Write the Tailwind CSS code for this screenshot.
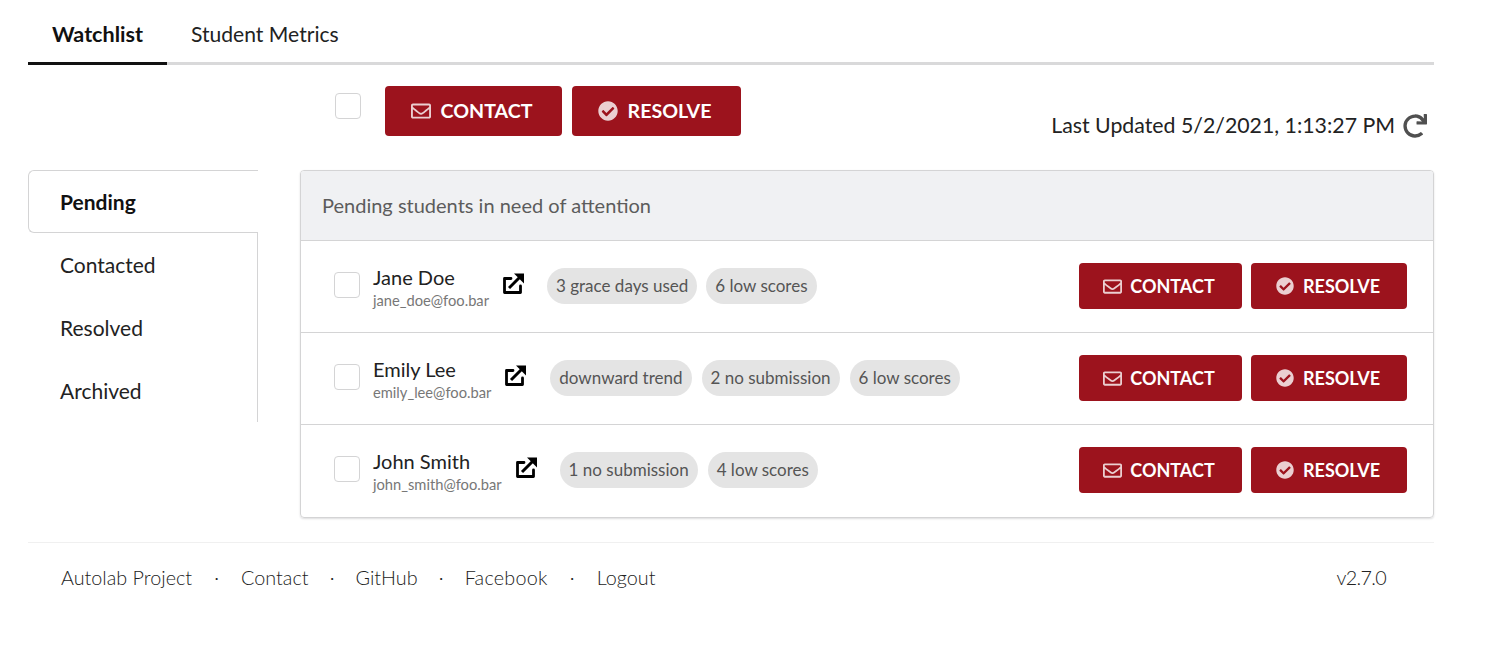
<!DOCTYPE html>
<html>
<head>
<meta charset="utf-8">
<script src="https://cdn.jsdelivr.net/npm/@tailwindcss/browser@4"></script>
</head>
<body class="bg-white font-['Lato',sans-serif] text-[#1b1c1d] w-[1494px] h-[647px] overflow-hidden">
<div class="w-[1406px] ml-[28px] pt-[10px]">
  <div class="flex h-[55px] border-b-[3px] border-[#d9d9da]">
    <div class="w-[139px] h-[55px] border-b-[3px] border-[#111] pl-[24px] pt-[10px] text-[21.6px] leading-[28px] font-bold text-[#111]">Watchlist</div>
    <div class="pl-[24px] pt-[10px] text-[21.1px] leading-[28px] text-[#222]">Student Metrics</div>
  </div>

  <div class="flex h-[105px] pl-[307px]">
    <div class="mt-[28px] w-[26px] h-[26px] rounded-[4px] border border-[#d4d4d5]"></div>
    <div class="ml-[24px] mt-[21px] flex gap-[10px]">
      <div class="w-[177px] h-[50px] pr-[4px] rounded-[4px] bg-[#9c131d] flex items-center justify-center gap-[10px] text-white font-bold text-[19.6px]">
        <svg class="w-[20px] h-[20px] opacity-80" viewBox="0 0 512 512" fill="currentColor"><path d="M464 64H48C21.49 64 0 85.49 0 112v288c0 26.51 21.49 48 48 48h416c26.51 0 48-21.49 48-48V112c0-26.51-21.49-48-48-48zm0 48v40.805c-22.422 18.259-58.168 46.651-134.587 106.49-16.841 13.247-50.201 45.072-73.413 44.701-23.208.375-56.579-31.459-73.413-44.701C106.18 199.465 70.425 171.067 48 152.805V112h416zM48 400V214.398c22.914 18.251 55.409 43.862 104.938 82.646 21.857 17.205 60.134 55.186 103.062 54.955 42.717.231 80.509-37.199 103.053-54.947 49.528-38.783 82.032-64.401 104.947-82.653V400H48z"/></svg>
        <span>CONTACT</span>
      </div>
      <div class="w-[169px] h-[50px] pr-[4px] rounded-[4px] bg-[#9c131d] flex items-center justify-center gap-[10px] text-white font-bold text-[19.6px]">
        <svg class="w-[20px] h-[20px] opacity-80" viewBox="0 0 512 512" fill="currentColor"><path d="M504 256c0 136.967-111.033 248-248 248S8 392.967 8 256 119.033 8 256 8s248 111.033 248 248zM227.314 387.314l184-184c6.248-6.248 6.248-16.379 0-22.627l-22.627-22.627c-6.248-6.249-16.379-6.249-22.628 0L216 308.118l-70.059-70.059c-6.248-6.248-16.379-6.248-22.628 0l-22.627 22.627c-6.248 6.248-6.248 16.379 0 22.627l104 104c6.249 6.249 16.379 6.249 22.628.001z"/></svg>
        <span>RESOLVE</span>
      </div>
    </div>
    <div class="ml-auto mr-[7px] mt-[46px] h-[30px] flex items-center gap-[8px]">
      <span class="text-[21.3px] text-[#222]">Last Updated 5/2/2021, 1:13:27 PM</span>
      <svg class="w-[24px] h-[24px] text-[#505050]" viewBox="0 0 512 512" fill="currentColor"><path d="M500.33 0h-47.41a12 12 0 0 0-12 12.57l4 82.76A247.42 247.42 0 0 0 256 8C119.34 8 7.9 119.53 8 256.19 8.1 393.07 119.1 504 256 504a247.1 247.1 0 0 0 166.18-63.91 12 12 0 0 0 .48-17.43l-34-34a12 12 0 0 0-16.38-.55A176 176 0 1 1 402.1 157.8l-101.53-4.87a12 12 0 0 0-12.57 12v47.41a12 12 0 0 0 12 12h200.33a12 12 0 0 0 12-12V12a12 12 0 0 0-12-12z"/></svg>
    </div>
  </div>

  <div class="flex">
    <div class="w-[230px] h-[252px] flex flex-col text-[21px]">
      <div class="h-[63px] border border-r-0 border-[#d4d4d5] rounded-l-[6px] pl-[31px] flex items-center font-bold text-[#111]">Pending</div>
      <div class="flex-1 border-r border-[#d4d4d5] flex flex-col">
        <div class="h-[63px] pl-[32px] flex items-center text-[#222]">Contacted</div>
        <div class="h-[63px] pl-[32px] flex items-center text-[#222]">Resolved</div>
        <div class="h-[63px] pl-[32px] flex items-center text-[#222]">Archived</div>
      </div>
    </div>

    <div class="ml-[42px] w-[1134px] h-[348px] rounded-[4px] border border-[#d4d4d5] shadow-[0_1px_2px_rgba(34,36,38,0.15)] overflow-hidden">
      <div class="h-[70px] bg-[#f0f1f3] border-b border-[#d4d4d5] pl-[21px] pb-[2px] flex items-center text-[20px] text-[#5c5c5c]">Pending students in need of attention</div>

      <div class="h-[92px] border-b border-[#d4d4d5] flex items-center pl-[33px] pr-[26px] pb-[1px]">
        <div class="w-[26px] h-[26px] mb-[2px] rounded-[4px] border border-[#d4d4d5]"></div>
        <div class="ml-[13px] mt-[3px] flex flex-col">
          <span class="text-[20px] leading-[25px] text-[#222]">Jane Doe</span>
          <span class="text-[14.7px] leading-[21px] text-[#777]">jane_doe@foo.bar</span>
        </div>
        <svg class="ml-[14px] mb-[5px] w-[21px] h-[21px] text-black" viewBox="0 0 21 21"><path d="M8 5.500H1.500v14h16V13" fill="none" stroke="currentColor" stroke-width="2.800" stroke-linejoin="round" stroke-linecap="round"/><path d="M6 15 17 4" fill="none" stroke="currentColor" stroke-width="3"/><path d="M11 .500h10V10.500z" fill="currentColor"/></svg>
        <div class="ml-[23px] flex gap-[9px] text-[17px] text-[#555]">
          <span class="h-[36px] rounded-full bg-[#e4e4e4] px-[9px] flex items-center">3 grace days used</span>
          <span class="h-[36px] rounded-full bg-[#e4e4e4] px-[9px] flex items-center">6 low scores</span>
        </div>
        <div class="ml-auto flex gap-[9px] text-white font-bold text-[18px]">
          <div class="w-[163px] h-[46px] pr-[3px] rounded-[4px] bg-[#9c131d] flex items-center justify-center gap-[8px]">
            <svg class="w-[19px] h-[19px] opacity-80" viewBox="0 0 512 512" fill="currentColor"><path d="M464 64H48C21.49 64 0 85.49 0 112v288c0 26.51 21.49 48 48 48h416c26.51 0 48-21.49 48-48V112c0-26.51-21.49-48-48-48zm0 48v40.805c-22.422 18.259-58.168 46.651-134.587 106.49-16.841 13.247-50.201 45.072-73.413 44.701-23.208.375-56.579-31.459-73.413-44.701C106.18 199.465 70.425 171.067 48 152.805V112h416zM48 400V214.398c22.914 18.251 55.409 43.862 104.938 82.646 21.857 17.205 60.134 55.186 103.062 54.955 42.717.231 80.509-37.199 103.053-54.947 49.528-38.783 82.032-64.401 104.947-82.653V400H48z"/></svg>
            <span>CONTACT</span>
          </div>
          <div class="w-[156px] h-[46px] pr-[2px] rounded-[4px] bg-[#9c131d] flex items-center justify-center gap-[9px]">
            <svg class="w-[18px] h-[18px] opacity-80" viewBox="0 0 512 512" fill="currentColor"><path d="M504 256c0 136.967-111.033 248-248 248S8 392.967 8 256 119.033 8 256 8s248 111.033 248 248zM227.314 387.314l184-184c6.248-6.248 6.248-16.379 0-22.627l-22.627-22.627c-6.248-6.249-16.379-6.249-22.628 0L216 308.118l-70.059-70.059c-6.248-6.248-16.379-6.248-22.628 0l-22.627 22.627c-6.248 6.248-6.248 16.379 0 22.627l104 104c6.249 6.249 16.379 6.249 22.628.001z"/></svg>
            <span>RESOLVE</span>
          </div>
        </div>
      </div>

      <div class="h-[92px] border-b border-[#d4d4d5] flex items-center pl-[33px] pr-[26px] pb-[1px]">
        <div class="w-[26px] h-[26px] mb-[2px] rounded-[4px] border border-[#d4d4d5]"></div>
        <div class="ml-[13px] mt-[3px] flex flex-col">
          <span class="text-[20px] leading-[25px] text-[#222]">Emily Lee</span>
          <span class="text-[14.7px] leading-[21px] text-[#777]">emily_lee@foo.bar</span>
        </div>
        <svg class="ml-[14px] mb-[5px] w-[21px] h-[21px] text-black" viewBox="0 0 21 21"><path d="M8 5.500H1.500v14h16V13" fill="none" stroke="currentColor" stroke-width="2.800" stroke-linejoin="round" stroke-linecap="round"/><path d="M6 15 17 4" fill="none" stroke="currentColor" stroke-width="3"/><path d="M11 .500h10V10.500z" fill="currentColor"/></svg>
        <div class="ml-[24px] flex gap-[10px] text-[17px] text-[#555]">
          <span class="h-[36px] rounded-full bg-[#e4e4e4] px-[9px] flex items-center">downward trend</span>
          <span class="h-[36px] rounded-full bg-[#e4e4e4] px-[9px] flex items-center">2 no submission</span>
          <span class="h-[36px] rounded-full bg-[#e4e4e4] px-[9px] flex items-center">6 low scores</span>
        </div>
        <div class="ml-auto flex gap-[9px] text-white font-bold text-[18px]">
          <div class="w-[163px] h-[46px] pr-[3px] rounded-[4px] bg-[#9c131d] flex items-center justify-center gap-[8px]">
            <svg class="w-[19px] h-[19px] opacity-80" viewBox="0 0 512 512" fill="currentColor"><path d="M464 64H48C21.49 64 0 85.49 0 112v288c0 26.51 21.49 48 48 48h416c26.51 0 48-21.49 48-48V112c0-26.51-21.49-48-48-48zm0 48v40.805c-22.422 18.259-58.168 46.651-134.587 106.49-16.841 13.247-50.201 45.072-73.413 44.701-23.208.375-56.579-31.459-73.413-44.701C106.18 199.465 70.425 171.067 48 152.805V112h416zM48 400V214.398c22.914 18.251 55.409 43.862 104.938 82.646 21.857 17.205 60.134 55.186 103.062 54.955 42.717.231 80.509-37.199 103.053-54.947 49.528-38.783 82.032-64.401 104.947-82.653V400H48z"/></svg>
            <span>CONTACT</span>
          </div>
          <div class="w-[156px] h-[46px] pr-[2px] rounded-[4px] bg-[#9c131d] flex items-center justify-center gap-[9px]">
            <svg class="w-[18px] h-[18px] opacity-80" viewBox="0 0 512 512" fill="currentColor"><path d="M504 256c0 136.967-111.033 248-248 248S8 392.967 8 256 119.033 8 256 8s248 111.033 248 248zM227.314 387.314l184-184c6.248-6.248 6.248-16.379 0-22.627l-22.627-22.627c-6.248-6.249-16.379-6.249-22.628 0L216 308.118l-70.059-70.059c-6.248-6.248-16.379-6.248-22.628 0l-22.627 22.627c-6.248 6.248-6.248 16.379 0 22.627l104 104c6.249 6.249 16.379 6.249 22.628.001z"/></svg>
            <span>RESOLVE</span>
          </div>
        </div>
      </div>

      <div class="h-[92px] flex items-center pl-[33px] pr-[26px] pb-[2px]">
        <div class="w-[26px] h-[26px] mb-[2px] rounded-[4px] border border-[#d4d4d5]"></div>
        <div class="ml-[13px] mt-[3px] flex flex-col">
          <span class="text-[20px] leading-[25px] text-[#222]">John Smith</span>
          <span class="text-[14.7px] leading-[21px] text-[#777]">john_smith@foo.bar</span>
        </div>
        <svg class="ml-[14px] mb-[5px] w-[21px] h-[21px] text-black" viewBox="0 0 21 21"><path d="M8 5.500H1.500v14h16V13" fill="none" stroke="currentColor" stroke-width="2.800" stroke-linejoin="round" stroke-linecap="round"/><path d="M6 15 17 4" fill="none" stroke="currentColor" stroke-width="3"/><path d="M11 .500h10V10.500z" fill="currentColor"/></svg>
        <div class="ml-[23px] flex gap-[10px] text-[17px] text-[#555]">
          <span class="h-[36px] rounded-full bg-[#e4e4e4] px-[9px] flex items-center">1 no submission</span>
          <span class="h-[36px] rounded-full bg-[#e4e4e4] px-[9px] flex items-center">4 low scores</span>
        </div>
        <div class="ml-auto flex gap-[9px] text-white font-bold text-[18px]">
          <div class="w-[163px] h-[46px] pr-[3px] rounded-[4px] bg-[#9c131d] flex items-center justify-center gap-[8px]">
            <svg class="w-[19px] h-[19px] opacity-80" viewBox="0 0 512 512" fill="currentColor"><path d="M464 64H48C21.49 64 0 85.49 0 112v288c0 26.51 21.49 48 48 48h416c26.51 0 48-21.49 48-48V112c0-26.51-21.49-48-48-48zm0 48v40.805c-22.422 18.259-58.168 46.651-134.587 106.49-16.841 13.247-50.201 45.072-73.413 44.701-23.208.375-56.579-31.459-73.413-44.701C106.18 199.465 70.425 171.067 48 152.805V112h416zM48 400V214.398c22.914 18.251 55.409 43.862 104.938 82.646 21.857 17.205 60.134 55.186 103.062 54.955 42.717.231 80.509-37.199 103.053-54.947 49.528-38.783 82.032-64.401 104.947-82.653V400H48z"/></svg>
            <span>CONTACT</span>
          </div>
          <div class="w-[156px] h-[46px] pr-[2px] rounded-[4px] bg-[#9c131d] flex items-center justify-center gap-[9px]">
            <svg class="w-[18px] h-[18px] opacity-80" viewBox="0 0 512 512" fill="currentColor"><path d="M504 256c0 136.967-111.033 248-248 248S8 392.967 8 256 119.033 8 256 8s248 111.033 248 248zM227.314 387.314l184-184c6.248-6.248 6.248-16.379 0-22.627l-22.627-22.627c-6.248-6.249-16.379-6.249-22.628 0L216 308.118l-70.059-70.059c-6.248-6.248-16.379-6.248-22.628 0l-22.627 22.627c-6.248 6.248-6.248 16.379 0 22.627l104 104c6.249 6.249 16.379 6.249 22.628.001z"/></svg>
            <span>RESOLVE</span>
          </div>
        </div>
      </div>
    </div>
  </div>

  <div class="mt-[24px] border-t border-[#f0f0f0] h-[70px] flex items-center pl-[33px] pr-[48px] text-[19.8px] font-light text-[#222]">
    <span>Autolab Project</span><span class="w-[49px] text-center">·</span>
    <span>Contact</span><span class="w-[47px] text-center">·</span>
    <span>GitHub</span><span class="w-[47px] text-center">·</span>
    <span class="tracking-[0.25px]">Facebook</span><span class="w-[49px] text-center">·</span>
    <span>Logout</span>
    <span class="ml-auto tracking-[-0.7px]">v2.7.0</span>
  </div>
</div>
</body>
</html>
